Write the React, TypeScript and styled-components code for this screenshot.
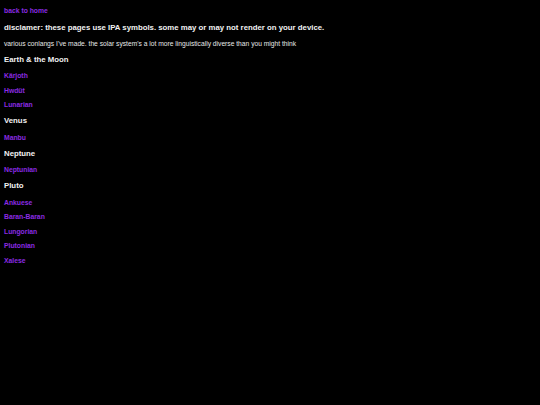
import React from "react";
import styled, { createGlobalStyle } from "styled-components";

const Global = createGlobalStyle`
  html, body {
    margin: 0;
    padding: 0;
    background: #000;
  }
  body {
    font-family: "Liberation Sans", Arial, sans-serif;
  }
`;

const Page = styled.div`
  display: flex;
  flex-direction: column;
  align-items: flex-start;
  padding: 3.5px 4px 0;
  min-height: 405px;
  box-sizing: border-box;
  background: #000;
`;

const Link = styled.a`
  display: block;
  color: #8a2be2;
  font-size: 6.8px;
  font-weight: bold;
  line-height: 14.5px;
  text-decoration: none;
`;

const Disclaimer = styled.h1`
  margin: 4.75px 0 0;
  color: #f2f2f2;
  font-size: 7.8px;
  font-weight: bold;
  line-height: 10px;
`;

const Intro = styled.p`
  margin: 6px 0 0;
  color: #e8e8e8;
  font-size: 6.7px;
  line-height: 10px;
`;

const Planet = styled.h2<{ $first?: boolean }>`
  margin: ${(p) => (p.$first ? "6px" : "3.75px")} 0 4.25px;
  color: #f2f2f2;
  font-size: 7.8px;
  font-weight: bold;
  line-height: 10px;
`;

const groups: { name: string; langs: string[] }[] = [
  { name: "Earth & the Moon", langs: ["Kärjoth", "Hwdüt", "Lunarian"] },
  { name: "Venus", langs: ["Manbu"] },
  { name: "Neptune", langs: ["Neptunian"] },
  { name: "Pluto", langs: ["Ankuese", "Baran-Baran", "Lungorian", "Plutonian", "Xalese"] },
];

export default function App() {
  return (
    <>
      <Global />
      <Page>
        <Link href="#">back to home</Link>
        <Disclaimer>disclamer: these pages use IPA symbols. some may or may not render on your device.</Disclaimer>
        <Intro>various conlangs I've made. the solar system's a lot more linguistically diverse than you might think</Intro>
        {groups.map((g, i) => (
          <React.Fragment key={g.name}>
            <Planet $first={i === 0}>{g.name}</Planet>
            {g.langs.map((l) => (
              <Link href="#" key={l}>
                {l}
              </Link>
            ))}
          </React.Fragment>
        ))}
      </Page>
    </>
  );
}
